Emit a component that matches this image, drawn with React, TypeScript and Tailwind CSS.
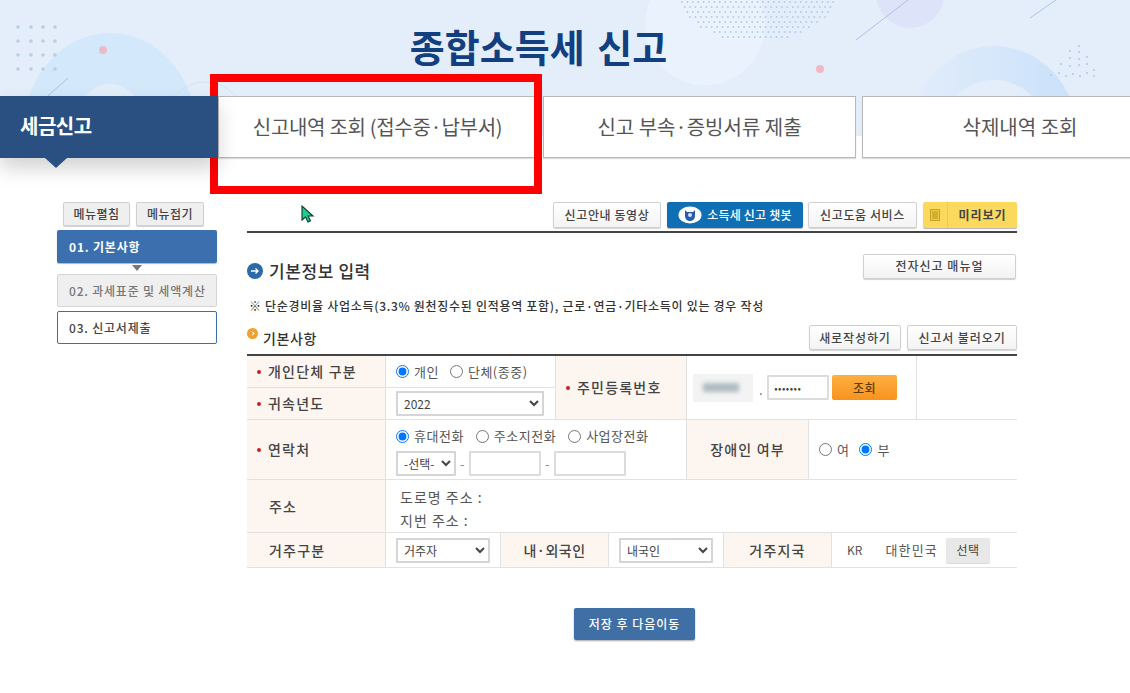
import type { ReactNode } from "react";

const halftone: { x: number; y: number; r: number }[] = [];
for (let row = 0; row < 9; row++) {
  for (let col = 0; col < 30; col++) {
    const x = 682 + col * 5.4 + (row % 2) * 2.7;
    const y = 2 + row * 5;
    const dx = (x - 757) / 78;
    const dy = (y + 6) / 48;
    if (dx * dx + dy * dy < 1) halftone.push({ x, y, r: 0.9 });
  }
}

const BannerArt = () => (
  <svg className="absolute left-0 top-0" width="1130" height="136" viewBox="0 0 1130 136">
    <defs>
      <linearGradient id="ringRight" x1="0" x2="1" y1="0" y2="0">
        <stop offset="0" stopColor="#e2edfb" />
        <stop offset="1" stopColor="#c9e1fa" />
      </linearGradient>
    </defs>
    <path d="M22 136a88 103 0 0 1 176 0h-50a38 52 0 0 0-76 0z" fill="#d3e8fa" />
    <circle cx="205" cy="122" r="40" fill="none" stroke="#d2e2f4" strokeWidth="1" />
    <line x1="41" y1="102" x2="68" y2="78" stroke="#a9c4e2" strokeWidth="1" />
    <circle cx="103" cy="50" r="4" fill="#ebbcc6" />
    {[27, 41, 55, 69].map((y) =>
      [18, 31, 43, 55].map((x) => <circle key={`${x}-${y}`} cx={x} cy={y} r="1.8" fill="#b4cfe2" />)
    )}
    <circle cx="705" cy="25" r="60" fill="#eaf2fd" />
    {halftone.map((d, i) => (
      <circle key={i} cx={d.x} cy={d.y} r={d.r} fill="#b2cbe9" />
    ))}
    <circle cx="910" cy="-6" r="34" fill="#dde4f9" />
    <line x1="856" y1="40" x2="908" y2="0" stroke="#a9c2ea" strokeWidth="1" />
    <line x1="1030" y1="18" x2="1056" y2="0" stroke="#a9c2ea" strokeWidth="1" />
    <circle cx="820" cy="69" r="4" fill="#efb8c2" />
    <path d="M910 136a84 90 0 0 1 168 0h-30a54 56 0 0 0-108 0z" fill="url(#ringRight)" />
    {[
      [1079, 46], [1070, 51], [1079, 52], [1070, 58], [1079, 59], [1087, 57], [1061, 64], [1070, 66],
      [1079, 65], [1087, 64], [1051, 75], [1059, 73], [1066, 76], [1073, 74], [1080, 76], [1087, 73], [1094, 76], [1094, 70],
    ].map(([x, y]) => (
      <circle key={`${x}-${y}`} cx={x} cy={y} r="1.1" fill="#b4cce4" />
    ))}
  </svg>
);

const Btn = ({ children, className = "" }: { children: ReactNode; className?: string }) => (
  <button className={`flex items-center justify-center rounded-[2px] border border-[#d0d0d0] bg-gradient-to-b from-white to-[#f3f3f3] text-[12px] font-medium text-[#444] shadow-[0_1px_1px_rgba(0,0,0,0.18)] ${className}`}>
    {children}
  </button>
);

const Th = ({ children, className = "", req = false }: { children: ReactNode; className?: string; req?: boolean }) => (
  <div className={`flex items-center border-b border-r border-[#e2e2e2] bg-[#fdf5ef] text-[14px] font-medium tracking-[1.2px] text-[#444] ${className}`}>
    {req && <span className="mr-[7px] ml-[10px] h-[4px] w-[4px] rounded-full bg-[#c8202c]" />}
    {children}
  </div>
);

const Td = ({ children, className = "" }: { children?: ReactNode; className?: string }) => (
  <div className={`border-b border-[#e2e2e2] bg-white text-[13px] tracking-[0.5px] text-[#555] ${className}`}>{children}</div>
);

const Radio = ({ name, label, checked = false }: { name: string; label: string; checked?: boolean }) => (
  <label className="flex items-center gap-[5px]">
    <input type="radio" name={name} defaultChecked={checked} className="m-0 h-[13px] w-[13px]" />
    <span>{label}</span>
  </label>
);

const Sel = ({ value, className = "" }: { value: string; className?: string }) => (
  <select defaultValue={value} className={`rounded-[1px] border-2 border-[#d5d5d5] bg-white pl-[2px] text-[12px] tracking-normal text-[#444] ${className}`}>
    <option>{value}</option>
  </select>
);

const TextInput = ({ className = "", value }: { className?: string; value?: string }) => (
  <input type="text" readOnly value={value ?? ""} className={`rounded-[1px] border-2 border-[#dcdcdc] bg-white outline-none ${className}`} />
);

const tabClass = "flex items-center justify-center border border-[#b8b8b8] bg-white text-[20px] text-[#555] shadow-[0_1px_1px_#dddddd]";

export default function App() {
  return (
    <div className="relative h-[693px] w-[1130px] overflow-hidden bg-white font-['Noto_Sans_CJK_KR','Noto_Sans',sans-serif]">
      <div className="absolute left-0 top-0 h-[136px] w-full bg-[#e4eefa]">
        <BannerArt />
      </div>

      <header className="relative flex h-[96px] items-start justify-center">
        <h1 className="mr-[53px] mt-[16px] text-[38px] font-bold leading-[60px] text-[#123f80] [word-spacing:4px]">종합소득세 신고</h1>
      </header>

      {/* tab row */}
      <nav className="relative flex h-[62px] w-[1300px]">
        <div className="relative z-10 flex w-[218px] items-center bg-[#2a5082] pb-[2px] pl-[20px] text-[20px] font-bold tracking-[-0.5px] text-white shadow-[0_10px_20px_rgba(0,0,0,0.18)]">
          세금신고
          <span className="absolute left-[45px] top-full h-0 w-0 border-x-[11px] border-t-[10px] border-x-transparent border-t-[#2a5082]" />
        </div>
        <div className={`w-[319px] tracking-[-0.3px] ${tabClass}`}>신고내역 조회 (접수중·납부서)</div>
        <div className={`ml-[6px] w-[313px] ${tabClass}`}>신고 부속·증빙서류 제출</div>
        <div className={`ml-[6px] w-[316px] ${tabClass}`}>삭제내역 조회</div>
      </nav>

      <div className="relative flex pl-[57px] pt-[44px]">
        {/* side menu */}
        <aside className="w-[160px]">
          <div className="flex gap-[6px] pl-[6px]">
            <Btn className="h-[24px] w-[67px] !bg-none !bg-[#efefef] tracking-[0.4px]">메뉴펼침</Btn>
            <Btn className="h-[24px] w-[68px] !bg-none !bg-[#efefef] tracking-[0.4px]">메뉴접기</Btn>
          </div>
          <div className="mt-[4px] flex h-[33px] items-center rounded-[2px] bg-[#3c6fae] pl-[12px] text-[12px] font-bold tracking-[0.8px] text-white shadow-[0_1px_1px_rgba(0,0,0,0.3)]">01. 기본사항</div>
          <div className="mx-auto mt-[2px] h-0 w-0 border-x-[5px] border-t-[6px] border-x-transparent border-t-[#777]" />
          <div className="mt-[3px] flex h-[33px] items-center rounded-[2px] border border-[#d5d5d5] bg-[#efefef] pl-[11px] text-[12px] font-medium tracking-[0.8px] text-[#777]">02. 과세표준 및 세액계산</div>
          <div className="mt-[4px] flex h-[33px] items-center rounded-[2px] border border-[#3c6fae] bg-white pl-[11px] text-[12px] font-medium tracking-[0.8px] text-[#444]">03. 신고서제출</div>
        </aside>

        {/* content */}
        <main className="relative ml-[30px] w-[770px]">
          <svg className="absolute left-[54px] top-[3px]" width="14" height="18" viewBox="0 0 14 18">
            <path d="M1 1v14l3.5-3 2.5 5 2.5-1.2-2.4-4.8H12z" fill="#1ccf8c" stroke="#0b3b2c" strokeWidth="1.1" />
          </svg>
          <div className="flex h-[31px] justify-end border-b-2 border-[#444] pb-[3px]">
            <Btn className="w-[108px] tracking-[0.6px]">신고안내 동영상</Btn>
            <button className="ml-[6px] flex w-[136px] items-center justify-center gap-[5px] rounded-[2px] bg-[#0f6fb5] text-[12px] font-medium tracking-[0.2px] text-white shadow-[0_1px_1px_rgba(0,0,0,0.3)]">
              <svg width="24" height="18" viewBox="0 0 24 18">
                <ellipse cx="12" cy="9" rx="11.5" ry="8.5" fill="#fff" />
                <path d="M7 4l2 2h6l2-2v6c0 3-2.5 5-5 5s-5-2-5-5z" fill="#2a5ca8" />
                <circle cx="12" cy="9" r="2" fill="#cfe3f5" />
              </svg>
              소득세 신고 챗봇
            </button>
            <Btn className="ml-[5px] w-[109px] tracking-[0.6px]">신고도움 서비스</Btn>
            <button className="ml-[6px] flex w-[94px] rounded-[2px] bg-[#fbd95c] text-[12px] font-bold tracking-[1px] text-[#444] shadow-[0_1px_1px_rgba(0,0,0,0.3)]">
              <span className="flex h-full w-[25px] items-center justify-center border-r border-[#eec94a]">
                <svg width="10" height="12" viewBox="0 0 10 12">
                  <rect x="0.5" y="0.5" width="9" height="11" fill="#f1c93f" stroke="#c9a22a" />
                  <path d="M2 3h6M2 5h6M2 7h6M2 9h6" stroke="#a88a1f" strokeWidth="0.8" />
                </svg>
              </span>
              <span className="flex h-full flex-1 items-center justify-center">미리보기</span>
            </button>
          </div>

          <div className="mt-[19px] flex h-[28px] items-center justify-between pr-[1px]">
            <div className="flex items-center gap-[6px] pt-[10px]">
              <span className="flex h-[16px] w-[16px] items-center justify-center rounded-full bg-[#2a6aa8]">
                <svg width="10" height="10" viewBox="0 0 10 10">
                  <path d="M1 5h7M5.5 2.5L8 5 5.5 7.5" fill="none" stroke="#fff" strokeWidth="1.4" />
                </svg>
              </span>
              <h2 className="text-[17px] font-medium tracking-[0.6px] text-[#333]">기본정보 입력</h2>
            </div>
            <Btn className="h-[25px] w-[153px] tracking-[1px]">전자신고 매뉴얼</Btn>
          </div>

          <p className="mt-[18px] pl-[2px] text-[12px] font-medium leading-[16px] tracking-[0.7px] text-[#333]">
            ※ 단순경비율 사업소득(3.3% 원천징수된 인적용역 포함), 근로·연금·기타소득이 있는 경우 작성
          </p>

          <div className="mt-[11px] flex h-[25px] items-center justify-between">
            <div className="relative flex items-center pl-[16px] pt-[2px] text-[14px] font-medium tracking-[0.6px] text-[#333]">
              <span className="absolute left-0 top-[2px] flex h-[11px] w-[11px] items-center justify-center rounded-full bg-[#f0a030]">
                <span className="h-[3px] w-[3px] rotate-45 border-r border-t border-white" />
              </span>
              기본사항
            </div>
            <div className="flex gap-[6px]">
              <Btn className="h-[25px] w-[92px] tracking-[0.9px]">새로작성하기</Btn>
              <Btn className="h-[25px] w-[110px] tracking-[0.9px]">신고서 불러오기</Btn>
            </div>
          </div>

          {/* form table */}
          <div className="mt-[4px] grid grid-cols-[139px_115px_55px_53px_78px_37px_85px_23px_85px_100px] grid-rows-[32px_32px_60px_53px_35px] border-t-2 border-[#444]">
            <Th req>개인단체 구분</Th>
            <Td className="col-span-2 flex items-center gap-[11px] border-r pl-[10px]">
              <Radio name="kind" label="개인" checked />
              <Radio name="kind" label="단체(종중)" />
            </Td>
            <Th req className="col-span-2 row-span-2">주민등록번호</Th>
            <Td className="col-span-4 row-span-2 flex items-center border-r pl-[6px]">
              <div className="relative h-[28px] w-[60px] overflow-hidden bg-[#f3f3f3]">
                <div className="absolute left-[10px] top-[9px] h-[9px] w-[36px] bg-[#aebbc2] blur-[2px]" />
              </div>
              <span className="ml-[6px] mr-[4px] mt-[4px] text-[#666]">.</span>
              <TextInput value="•••••••" className="h-[25px] w-[62px] pl-[5px] text-[10px] text-[#444]" />
              <button className="ml-[3px] h-[25px] w-[65px] rounded-[2px] bg-gradient-to-b from-[#fdb040] to-[#f8921c] text-[12px] font-medium text-[#5a3a10]">조회</button>
            </Td>
            <Td className="row-span-2" />

            <Th req>귀속년도</Th>
            <Td className="col-span-2 flex items-center border-r pl-[10px]">
              <Sel value="2022" className="h-[25px] w-[148px]" />
            </Td>

            <Th req>연락처</Th>
            <Td className="col-span-4 flex flex-col justify-center gap-[5px] border-r pl-[10px] pt-[3px]">
              <div className="flex items-center gap-[12px]">
                <Radio name="tel" label="휴대전화" checked />
                <Radio name="tel" label="주소지전화" />
                <Radio name="tel" label="사업장전화" />
              </div>
              <div className="flex items-center gap-[4px] text-[#888]">
                <Sel value="-선택-" className="h-[25px] w-[60px]" />
                -
                <TextInput className="h-[25px] w-[72px]" />
                -
                <TextInput className="h-[25px] w-[72px]" />
              </div>
            </Td>
            <Th className="col-span-2 justify-center">장애인 여부</Th>
            <Td className="col-span-3 flex items-center gap-[10px] pl-[10px]">
              <Radio name="dis" label="여" />
              <Radio name="dis" label="부" checked />
            </Td>

            <Th className="pl-[22px]">주소</Th>
            <Td className="col-span-9 flex flex-col justify-center gap-[2px] pl-[14px] pt-[6px] text-[14px] tracking-[1px]">
              <span>도로명 주소 :</span>
              <span>지번 주소 :</span>
            </Td>

            <Th className="pl-[22px]">거주구분</Th>
            <Td className="flex items-center border-r pl-[10px]">
              <Sel value="거주자" className="h-[25px] w-[94px]" />
            </Td>
            <Th className="col-span-2 justify-center !tracking-[0.5px]">내·외국인</Th>
            <Td className="col-span-2 flex items-center border-r pl-[10px]">
              <Sel value="내국인" className="h-[25px] w-[94px]" />
            </Td>
            <Th className="col-span-2 justify-center">거주지국</Th>
            <Td className="col-span-2 flex items-center pl-[15px]">
              <span className="mr-[23px] text-[12px] tracking-normal">KR</span>
              <span className="tracking-[1.2px]">대한민국</span>
              <button className="ml-[8px] h-[25px] w-[44px] rounded-[2px] bg-[#e8e8e8] text-[12px] text-[#444] shadow-[0_1px_1px_rgba(0,0,0,0.15)]">선택</button>
            </Td>
          </div>

          <div className="mt-[40px] flex justify-center pl-[5px]">
            <button className="h-[32px] w-[121px] rounded-[2px] bg-[#3f6fa5] text-[12px] font-medium tracking-[1px] text-white shadow-[0_1px_2px_rgba(0,0,0,0.35)]">저장 후 다음이동</button>
          </div>
        </main>
      </div>

      {/* red highlight */}
      <div className="absolute left-[210px] top-[74px] h-[120px] w-[332px] border-[8px] border-[#ff0000]" />
    </div>
  );
}
